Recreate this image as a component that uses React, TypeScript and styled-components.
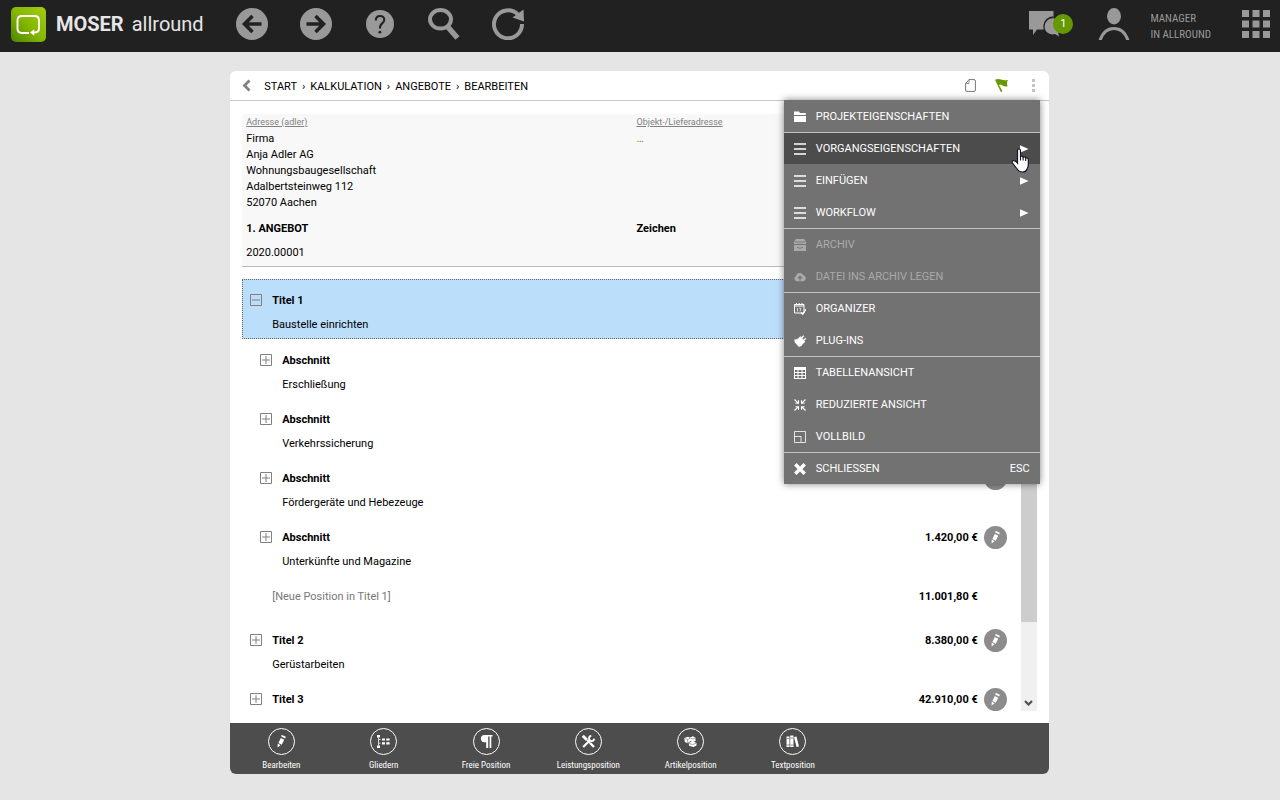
import React from "react";
import styled, { createGlobalStyle, css } from "styled-components";

const sans = `Roboto, "Liberation Sans", sans-serif`;
const condensed = `"Roboto Condensed", Roboto, "Liberation Sans", sans-serif`;

const GlobalStyle = createGlobalStyle`
  *, *::before, *::after { box-sizing: border-box; }
  body {
    margin: 0;
    background: #e5e5e5;
    color: #000;
    font: 11px/16px ${sans};
  }
  button { border: 0; padding: 0; background: none; color: inherit; font: inherit; cursor: pointer; }
  a { color: inherit; text-decoration: none; }
  svg { display: block; flex: none; }
  ul { list-style: none; margin: 0; padding: 0; }
`;

const Page = styled.div`
  display: flex;
  flex-direction: column;
  height: 100vh;
`;

/* ---------- top bar ---------- */

const TopBar = styled.header`
  display: flex;
  align-items: center;
  flex: none;
  height: 52px;
  padding: 0 8px 4px 11px;
  background: #212121;
  color: #999;
`;

const Brand = styled.a`
  display: flex;
  align-items: center;
  gap: 10px;
  width: 225px;
  color: #e6e6e6;
  font-size: 20px;
  line-height: 24px;
`;

const BrandName = styled.span`
  display: flex;
  gap: 8px;
`;

const TopNav = styled.nav`
  display: flex;
  gap: 32px;
  flex: 1;
`;

const TopButton = styled.button`
  display: flex;
  align-items: center;
  justify-content: center;
  min-width: 32px;
  height: 32px;
`;

const ChatButton = styled(TopButton)`
  position: relative;
  width: 44px;
  justify-content: flex-start;
  margin-right: 25px;
`;

const Badge = styled.span`
  position: absolute;
  right: 0;
  top: 6px;
  width: 20px;
  height: 20px;
  border-radius: 50%;
  background: #690;
  color: #fff;
  font-size: 11px;
  line-height: 20px;
  text-align: center;
`;

const UserButton = styled(TopButton)`
  gap: 20px;
  margin-right: 29px;
  text-align: left;
  font-family: ${condensed};
`;

const UserName = styled.span`
  display: block;
  padding-top: 5px;
`;

/* ---------- panel ---------- */

const Main = styled.main`
  display: flex;
  justify-content: center;
  flex: 1;
  min-height: 0;
  padding: 19px 1px 26px 0;
`;

const Panel = styled.section`
  position: relative;
  display: flex;
  flex-direction: column;
  width: 64%;
  background: #fff;
  border-radius: 6px;
`;

const PanelHead = styled.div`
  display: flex;
  align-items: center;
  flex: none;
  height: 30px;
  padding: 0 9px 0 12px;
  border-bottom: 1px solid #c8c8c8;
`;

const BackButton = styled.button`
  margin-right: 13px;
`;

const Crumbs = styled.nav`
  display: flex;
  gap: 5px;
  flex: 1;
  padding-top: 2px;
`;

const HeadTools = styled.div`
  display: flex;
  align-items: center;
  gap: 19px;
`;

const PanelBody = styled.div`
  display: flex;
  flex-direction: column;
  flex: 1;
  min-height: 0;
  padding: 13px 12px 12px;
`;

const Address = styled.div`
  display: grid;
  grid-template-columns: 1fr 1fr;
  flex: none;
  height: 153px;
  padding: 0 10px 0 4px;
  margin-bottom: 12px;
  background: #f8f8f8;
  border-bottom: 1px solid #bbb;
`;

const FieldLink = styled.a`
  display: block;
  margin-bottom: 1px;
  color: #808080;
  font-size: 9px;
  text-decoration: underline;
`;

const Lines = styled.address`
  height: 90px;
  font-style: normal;
`;

const MoreLink = styled.a`
  color: #690;
`;

const FieldTitle = styled.strong`
  display: block;
  margin-bottom: 8px;
`;

/* ---------- list ---------- */

const ListArea = styled.div`
  display: flex;
  flex: 1;
  min-height: 0;
`;

const List = styled.ul`
  flex: 1;
  overflow: hidden;
`;

const Row = styled.li<{ $level?: number; $selected?: boolean; $short?: boolean }>`
  display: flex;
  align-items: flex-start;
  height: ${(p) => (p.$short ? 44 : p.$selected ? 60 : 59)}px;
  padding: 14px 14px 0 ${(p) => 8 + (p.$level ?? 0) * 10}px;
  ${(p) =>
    p.$selected &&
    css`
      background: #bbdefb;
      outline: 1px dotted #666;
      outline-offset: -1px;
    `}
`;

const Toggle = styled.button`
  width: 12px;
  height: 12px;
  margin: 1px 10px 0 0;
`;

const RowText = styled.div<{ $muted?: boolean }>`
  flex: 1;
  margin-left: ${(p) => (p.$muted ? 22 : 0)}px;
  color: ${(p) => (p.$muted ? "#777" : "#000")};
`;

const RowTitle = styled.strong`
  display: block;
  margin-bottom: 8px;
`;

const Price = styled.strong<{ $alone?: boolean }>`
  margin-right: ${(p) => (p.$alone ? 29 : 6)}px;
`;

const EditButton = styled.button`
  display: flex;
  align-items: center;
  justify-content: center;
  width: 23px;
  height: 23px;
  margin-top: -4px;
  border-radius: 50%;
  background: #8c8c8c;
  color: #fff;
`;

const ScrollTrack = styled.div`
  display: flex;
  flex-direction: column;
  width: 16px;
  background: #f0f0f0;
`;

const ScrollArrow = styled.button`
  display: flex;
  align-items: center;
  justify-content: center;
  height: 17px;
`;

const ScrollRail = styled.div`
  flex: 1;
`;

const ScrollThumb = styled.div`
  height: 82%;
  background: #cdcdcd;
`;

/* ---------- menu ---------- */

const Menu = styled.div`
  position: absolute;
  top: 29px;
  right: 9px;
  width: 256px;
  padding-top: 1px;
  background: #727272;
  color: #fff;
  box-shadow: 0 0 7px rgba(0, 0, 0, 0.5);
`;

const MenuGroup = styled.div`
  display: grid;
  gap: 1px;
  & + & {
    border-top: 1px solid #c4c4c4;
  }
`;

const MenuItem = styled.button<{ $active?: boolean }>`
  display: flex;
  align-items: center;
  gap: 10px;
  width: 100%;
  height: 31px;
  padding: 0 10px;
  text-align: left;
  background: ${(p) => (p.$active ? "#4c4c4c" : "transparent")};
  &:disabled {
    color: #aaa;
    cursor: default;
  }
`;

const MenuLabel = styled.span`
  flex: 1;
`;

const Pointer = styled.svg`
  position: absolute;
  top: 48px;
  right: 10px;
`;

/* ---------- bottom bar ---------- */

const BottomBar = styled.nav`
  display: flex;
  flex: none;
  height: 51px;
  background: #4d4d4d;
  border-radius: 0 0 6px 6px;
`;

const BottomButton = styled.button`
  display: flex;
  flex-direction: column;
  align-items: center;
  gap: 2px;
  width: 12.5%;
  padding-top: 5px;
  color: #fff;
  font-family: ${condensed};
  font-size: 9px;
  white-space: nowrap;
`;

const Ring = styled.span`
  display: flex;
  align-items: center;
  justify-content: center;
  width: 27px;
  height: 27px;
  border: 1px solid #fff;
  border-radius: 50%;
`;

/* ---------- drawings ---------- */

const Logo = () => (
  <svg width="35" height="35" viewBox="0 0 35 35" fill="none">
    <defs>
      <linearGradient id="logo" x1="0" y1="1" x2="1" y2="0">
        <stop offset="0" stopColor="#4b8500" />
        <stop offset="0.5" stopColor="#86b800" />
        <stop offset="1" stopColor="#a2cc10" />
      </linearGradient>
    </defs>
    <rect width="35" height="35" rx="5" fill="url(#logo)" />
    <path d="M18 26H11q-4.500 0-4.500-4.500V13.500Q6.500 9 11 9H23.500Q28 9 28 13.500V21.500Q28 25.500 23 25.500H21" stroke="#fff" strokeWidth="1.900" />
    <path d="M19 25.500l4.200-3.300v6.600z" fill="#fff" />
  </svg>
);

const ArrowDisc = ({ flip }: { flip?: boolean }) => (
  <svg width="32" height="32" viewBox="0 0 32 32">
    <circle cx="16" cy="16" r="16" fill="#999" />
    <path
      d={flip ? "M6.500 16H23M15.500 8l8 8-8 8" : "M25.500 16H9M16.500 8l-8 8 8 8"}
      fill="none"
      stroke="#212121"
      strokeWidth="3.600"
    />
  </svg>
);

const Help = () => (
  <svg width="28" height="28" viewBox="0 0 28 28">
    <circle cx="14" cy="14" r="14" fill="#999" />
    <path d="M9.800 10.500Q9.800 6 14 6T18.300 9.800Q18.300 12 16 13.600T14 18.500" fill="none" stroke="#212121" strokeWidth="2" />
    <circle cx="13.900" cy="22.200" r="1.400" fill="#212121" />
  </svg>
);

const Search = () => (
  <svg width="32" height="32" viewBox="0 0 32 32" fill="none" stroke="#999">
    <ellipse cx="12.500" cy="11.300" rx="10.500" ry="9.300" strokeWidth="4" />
    <path d="M18.500 17.500L29.500 30" strokeWidth="5.500" />
  </svg>
);

const Reload = () => (
  <svg width="32" height="32" viewBox="0 0 32 32">
    <path d="M26 6.500A14 14 0 1 0 30 16" fill="none" stroke="#999" strokeWidth="4" />
    <path d="M31.500 1.500L32 13.500 20.500 9.500z" fill="#999" />
  </svg>
);

const Chat = () => (
  <svg width="32" height="28" viewBox="0 0 32 28">
    <path d="M0 1h24.500v18.500H8L4 25v-5.500H0z" fill="#999" />
    <path d="M24.500 7.500a9 9 0 0 0-9 8.500q0 5 4 7.500" fill="none" stroke="#212121" strokeWidth="2.500" />
    <path d="M25 8.500a8 8 0 1 0 1 15.500l4 2.500-1-4.500a8 8 0 0 0-4-13.500z" fill="#999" />
  </svg>
);

const User = () => (
  <svg width="32" height="32" viewBox="0 0 32 32">
    <ellipse cx="16" cy="8.300" rx="7" ry="8.200" fill="#999" />
    <path d="M2 32.500Q6 20.500 16 20.500T30 32.500" fill="none" stroke="#999" strokeWidth="3" />
  </svg>
);

const Apps = () => (
  <svg width="28" height="28" viewBox="0 0 28 28" fill="#999">
    {[0, 10.5, 21].map((y) => [0, 10.5, 21].map((x) => <rect key={`${x}-${y}`} x={x} y={y} width="7" height="7" />))}
  </svg>
);

const Pencil = () => (
  <svg width="13" height="13" viewBox="0 0 13 13" fill="currentColor">
    <path d="M6.200.2h1.400l3.200 1.600-.4 1.500-.9-.1-3.200-1.600zM5.800 3l3.400 1.800-2.500 5-3.300-1.800zM2.700 8.600l2.800 1.600-2.900 2.400z" />
  </svg>
);

const Outline = () => (
  <svg width="13" height="13" viewBox="0 0 13 13" fill="#fff">
    <path d="M0 0h3v2.500H0zM0 10.500h3V13H0z" />
    <path d="M1 2.500h1v8H1zM2 4h1.500v1H2zM2 7.700h1.500v1H2z" opacity=".8" />
    <path d="M5 3.400h3v2.200H5zM9.300 3.400h3.300v2.200H9.300zM5 7.200h3v2.200H5zM9.300 7.200h3.300v2.200H9.300z" />
  </svg>
);

const Pilcrow = () => (
  <svg width="13" height="13" viewBox="0 0 13 13" fill="#fff">
    <path d="M4.500 0H12.500v1.600H11.300V13H9.600V1.600H8.200V13H6.200V7.200H4.500a3.600 3.600 0 0 1 0-7.200z" />
  </svg>
);

const Tools = () => (
  <svg width="13" height="13" viewBox="0 0 13 13" fill="none" stroke="#fff">
    <path d="M1.200 12L8.500 4.800" strokeWidth="2.200" />
    <path d="M9.300.9a2.600 2.600 0 1 0 2.900 2.800" strokeWidth="1.800" />
    <path d="M.8.800L5 5" strokeWidth="2.800" />
    <path d="M5 5l3 3" strokeWidth="1.200" />
    <path d="M8 8l4 4" strokeWidth="2.400" />
  </svg>
);

const Boxes = () => (
  <svg width="13" height="11" viewBox="0 0 13 11">
    <path d="M.3 2L4 .8 6 1.800V5.500L3.500 7.200.8 6zM6 1.600L9 .3l2.500 1.400V5L9 6 6 5z" fill="#fff" />
    <path d="M4.800 7L8.500 5l4 2v2.500L9.500 11 5 9.800z" fill="#fff" />
    <path d="M1 2.500l2.600 1L6 2.200M6.500 2.200L9 3l2.200-1M3.600 3.500V7M5 7.500l3.500 1L12 7.300" fill="none" stroke="#4d4d4d" strokeWidth=".5" />
  </svg>
);

const Books = () => (
  <svg width="13" height="13" viewBox="0 0 13 13" fill="#fff">
    <path d="M.5 1.500h3V12h-3zM4.200.5h3.300V12H4.200zM8 2l2.500-.6L13 11.500l-2.500.5z" />
    <path d="M.5 3.500h3M4.200 3h3.300M.5 10h3M4.200 10h3.300" stroke="#4d4d4d" strokeWidth=".6" />
  </svg>
);

const ChevronLeft = () => (
  <svg width="9" height="13" viewBox="0 0 9 13">
    <path d="M7.500 1.500L2.500 6.500l5 5" fill="none" stroke="#808080" strokeWidth="2.800" />
  </svg>
);

const Sheet = () => (
  <svg width="11" height="13" viewBox="0 0 11 13" fill="none" stroke="#777">
    <path d="M4 .6H9q1.400 0 1.400 1.400V11q0 1.400-1.400 1.400H2Q.6 12.400.6 11V4.500z" />
    <path d="M4 .6V4.500H.6" strokeWidth=".8" />
  </svg>
);

const Flag = () => (
  <svg width="13" height="13" viewBox="0 0 13 13" fill="#690">
    <path d="M0 .8Q3-.6 6 .6q2.500 1 7 .4Q11.300 3.300 12.600 7.300 9.500 8 7.500 6.500T4 6L7.500 12.200l-1.600.8z" />
  </svg>
);

const Kebab = () => (
  <svg width="13" height="13" viewBox="0 0 13 13" fill="#c4c4c4">
    <path d="M5 0h3v3H5zM5 5h3v3H5zM5 10h3v3H5z" />
  </svg>
);

const Expander = ({ open }: { open?: boolean }) => (
  <svg width="12" height="12" viewBox="0 0 12 12" fill="none" stroke="#808080">
    <path d="M.5.5h11v11H.5zM2 6h8" />
    {!open && <path d="M6 2v8" />}
  </svg>
);

const Caret = ({ up }: { up?: boolean }) => (
  <svg width="9" height="6" viewBox="0 0 9 6">
    <path d={up ? "M1 5l3.500-3.500L8 5" : "M1 1l3.500 3.500L8 1"} fill="none" stroke="#505050" strokeWidth="2.200" />
  </svg>
);

const SubArrow = () => (
  <svg width="10" height="8" viewBox="0 0 10 8">
    <path d="M0 .3L8.500 4 0 7.700z" fill="#fff" />
  </svg>
);

const HandPointer = () => (
  <Pointer width="19" height="26" viewBox="0 0 19 26" aria-hidden="true">
    <path
      d="M6.500 2.500a1.500 1.500 0 0 1 3 0V8.500q2-1 2.600.6 2-.8 2.600.8 2.300-.5 2.600 1.600V17q0 2-1.500 4.500Q15 24 11.500 24T6.500 21.500L1.500 15Q.6 13.200 2 12.700t3 1l1.500 1.500z"
      fill="#fff"
      stroke="#15152a"
      strokeWidth="1.200"
    />
    <path d="M9.500 8.500v4M12.100 9v3.500M14.700 10v3" stroke="#15152a" strokeWidth="1.100" />
  </Pointer>
);

const menuShapes: Record<string, React.ReactNode> = {
  folder: <path d="M0 .5h5l1 1.500h5.800V4H0zM0 5h12v6H0z" fill="currentColor" />,
  lines: <path d="M0 1h12M0 6h12M0 11h12" stroke="currentColor" strokeWidth="1.600" />,
  archive: (
    <>
      <path d="M2 0h8l2 3v2H0V3zM0 6h12v6.500H0z" fill="currentColor" />
      <path d="M1 3h10M3 8.300q3 2 6 0M4 5.500h4" fill="none" stroke="#727272" strokeWidth=".9" />
    </>
  ),
  cloud: (
    <>
      <path d="M2.800 10.200A2.600 2.600 0 0 1 2 5.200 3.800 3.800 0 0 1 9.300 4.300a3 3 0 0 1 .2 5.900z" fill="currentColor" />
      <path d="M6 9.800V5.500M4 7.300l2-2 2 2" fill="none" stroke="#727272" strokeWidth="1.100" />
    </>
  ),
  calendar: (
    <>
      <path d="M.5 1.500h9.500V10H.5zM.5 3h9.500" fill="none" stroke="currentColor" />
      <path d="M2.500 0v2M5.200 0v2M8 0v2" fill="none" stroke="currentColor" />
      <path d="M3.500 5v3.500M5.200 5.300h1.800l-1 3.200" fill="none" stroke="currentColor" strokeWidth=".7" />
      <path d="M7 9.500l1.800 1.700L12 6" fill="none" stroke="currentColor" strokeWidth="1.300" />
    </>
  ),
  plug: (
    <>
      <path d="M.3 4.500L3 4.200 6.500 1.200l4.800 5.600-2.800 2.500-.8 1.500L5 12 .8 7.500z" fill="currentColor" />
      <path d="M7.500 3L9.800.8M9.600 5.300L12 3.200" stroke="currentColor" strokeWidth="1.300" />
    </>
  ),
  table: (
    <path d="M0 0h12v12H0zM1 3v2h2.500V3zM4.500 3v2h3V3zM8.500 3v2H11V3zM1 6v2h2.500V6zM4.500 6v2h3V6zM8.500 6v2H11V6zM1 9v2h2.500V9zM4.500 9v2h3V9zM8.500 9v2H11V9z" fill="currentColor" fillRule="evenodd" />
  ),
  shrink: (
    <path d="M.5.500l3.500 3.500M1.500 4.200h3V1.200M11.500.5L8 4M7.500 1.200v3h3M.5 11.500L4 8M1.500 7.800h3v3M11.500 11.500L8 8M10.500 7.800h-3v3" fill="none" stroke="currentColor" strokeWidth="1.100" />
  ),
  full: <path d="M.5.500h11v11H.5zM.5 5.500h6.500v6" fill="none" stroke="currentColor" strokeWidth=".8" />,
  close: <path d="M1.300 1.300l9.400 9.400M10.700 1.300l-9.400 9.400" stroke="currentColor" strokeWidth="3.400" />,
};

const MenuIcon = ({ name }: { name: string }) => (
  <svg width="12" height="12" viewBox="0 0 12 12">
    {menuShapes[name]}
  </svg>
);

/* ---------- data ---------- */

interface Entry {
  icon: string;
  label: string;
  sub?: boolean;
  active?: boolean;
  disabled?: boolean;
  shortcut?: string;
}

const menu: Entry[][] = [
  [{ icon: "folder", label: "PROJEKTEIGENSCHAFTEN" }],
  [
    { icon: "lines", label: "VORGANGSEIGENSCHAFTEN", sub: true, active: true },
    { icon: "lines", label: "EINFÜGEN", sub: true },
    { icon: "lines", label: "WORKFLOW", sub: true },
  ],
  [
    { icon: "archive", label: "ARCHIV", disabled: true },
    { icon: "cloud", label: "DATEI INS ARCHIV LEGEN", disabled: true },
  ],
  [
    { icon: "calendar", label: "ORGANIZER" },
    { icon: "plug", label: "PLUG-INS" },
  ],
  [
    { icon: "table", label: "TABELLENANSICHT" },
    { icon: "shrink", label: "REDUZIERTE ANSICHT" },
    { icon: "full", label: "VOLLBILD" },
  ],
  [{ icon: "close", label: "SCHLIESSEN", shortcut: "ESC" }],
];

const rows = [
  { title: "Titel 1", text: "Baustelle einrichten", level: 0, open: true },
  { title: "Abschnitt", text: "Erschließung", level: 1 },
  { title: "Abschnitt", text: "Verkehrssicherung", level: 1 },
  { title: "Abschnitt", text: "Fördergeräte und Hebezeuge", level: 1 },
  { title: "Abschnitt", text: "Unterkünfte und Magazine", level: 1, price: "1.420,00 €" },
  { placeholder: "[Neue Position in Titel 1]", level: 0, price: "11.001,80 €" },
  { title: "Titel 2", text: "Gerüstarbeiten", level: 0, price: "8.380,00 €" },
  { title: "Titel 3", text: "", level: 0, price: "42.910,00 €" },
];

const actions: [string, React.ReactNode][] = [
  ["Bearbeiten", <Pencil />],
  ["Gliedern", <Outline />],
  ["Freie Position", <Pilcrow />],
  ["Leistungsposition", <Tools />],
  ["Artikelposition", <Boxes />],
  ["Textposition", <Books />],
];

const crumbs = ["START", "KALKULATION", "ANGEBOTE", "BEARBEITEN"];

export default function App() {
  return (
    <Page>
      <GlobalStyle />
      <TopBar>
        <Brand href="#">
          <Logo />
          <BrandName>
            <strong>MOSER</strong>
            <span>allround</span>
          </BrandName>
        </Brand>
        <TopNav>
          <TopButton aria-label="Zurück"><ArrowDisc /></TopButton>
          <TopButton aria-label="Vorwärts"><ArrowDisc flip /></TopButton>
          <TopButton aria-label="Hilfe"><Help /></TopButton>
          <TopButton aria-label="Suchen"><Search /></TopButton>
          <TopButton aria-label="Aktualisieren"><Reload /></TopButton>
        </TopNav>
        <ChatButton aria-label="Nachrichten">
          <Chat />
          <Badge>1</Badge>
        </ChatButton>
        <UserButton>
          <User />
          <UserName>
            MANAGER
            <br />
            IN ALLROUND
          </UserName>
        </UserButton>
        <TopButton aria-label="Module"><Apps /></TopButton>
      </TopBar>

      <Main>
        <Panel>
          <PanelHead>
            <BackButton aria-label="Zurück"><ChevronLeft /></BackButton>
            <Crumbs>
              {crumbs.map((c, i) => (
                <React.Fragment key={c}>
                  {i > 0 && <span>›</span>}
                  <a href="#">{c}</a>
                </React.Fragment>
              ))}
            </Crumbs>
            <HeadTools>
              <button aria-label="Dokument"><Sheet /></button>
              <button aria-label="Markieren"><Flag /></button>
              <button aria-label="Menü"><Kebab /></button>
            </HeadTools>
          </PanelHead>

          <PanelBody>
            <Address>
              <div>
                <FieldLink href="#">Adresse (adler)</FieldLink>
                <Lines>
                  Firma
                  <br />
                  Anja Adler AG
                  <br />
                  Wohnungsbaugesellschaft
                  <br />
                  Adalbertsteinweg 112
                  <br />
                  52070 Aachen
                </Lines>
                <FieldTitle>1. ANGEBOT</FieldTitle>
                2020.00001
              </div>
              <div>
                <FieldLink href="#">Objekt-/Lieferadresse</FieldLink>
                <Lines><MoreLink href="#">…</MoreLink></Lines>
                <FieldTitle>Zeichen</FieldTitle>
              </div>
            </Address>

            <ListArea>
              <List>
                {rows.map((r, i) =>
                  r.placeholder ? (
                    <Row key={i} $short>
                      <RowText $muted>{r.placeholder}</RowText>
                      <Price $alone>{r.price}</Price>
                    </Row>
                  ) : (
                    <Row key={i} $level={r.level} $selected={r.open}>
                      <Toggle aria-expanded={!!r.open} aria-label={r.title}>
                        <Expander open={r.open} />
                      </Toggle>
                      <RowText>
                        <RowTitle>{r.title}</RowTitle>
                        {r.text}
                      </RowText>
                      {r.price && <Price>{r.price}</Price>}
                      <EditButton aria-label="Bearbeiten"><Pencil /></EditButton>
                    </Row>
                  )
                )}
              </List>
              <ScrollTrack>
                <ScrollArrow aria-label="Nach oben"><Caret up /></ScrollArrow>
                <ScrollRail><ScrollThumb /></ScrollRail>
                <ScrollArrow aria-label="Nach unten"><Caret /></ScrollArrow>
              </ScrollTrack>
            </ListArea>
          </PanelBody>

          <BottomBar>
            {actions.map(([label, icon]) => (
              <BottomButton key={label}>
                <Ring>{icon}</Ring>
                {label}
              </BottomButton>
            ))}
          </BottomBar>

          <Menu role="menu">
            {menu.map((group, i) => (
              <MenuGroup key={i} role="group">
                {group.map((item) => (
                  <MenuItem key={item.label} role="menuitem" $active={item.active} disabled={item.disabled}>
                    <MenuIcon name={item.icon} />
                    <MenuLabel>{item.label}</MenuLabel>
                    {item.sub && <SubArrow />}
                    {item.shortcut && <span>{item.shortcut}</span>}
                  </MenuItem>
                ))}
              </MenuGroup>
            ))}
            <HandPointer />
          </Menu>
        </Panel>
      </Main>
    </Page>
  );
}
